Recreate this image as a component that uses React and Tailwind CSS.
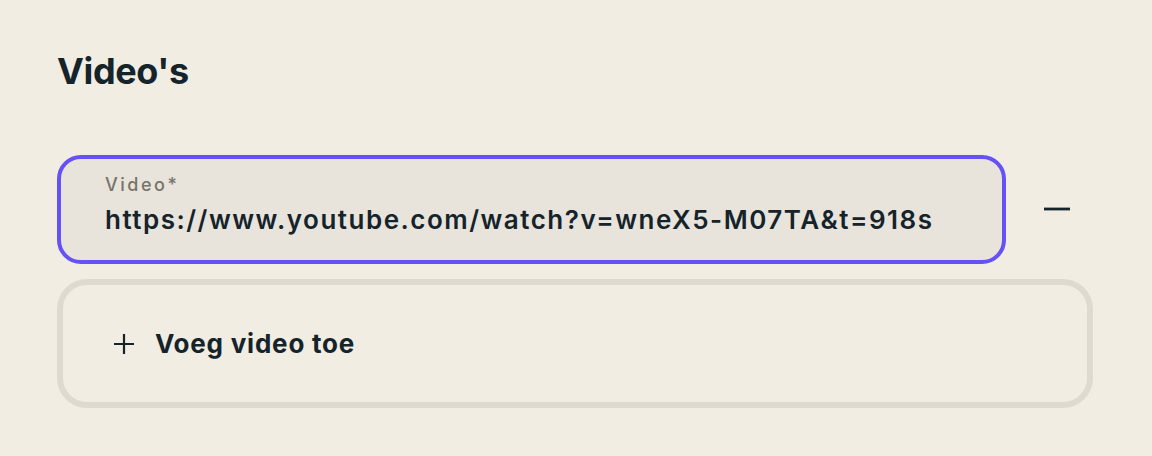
import React from 'react';

function Minus() {
    return (
        <svg width="26" height="26" viewBox="0 0 26 26" fill="none">
            <path d="M0 13h26" stroke="#15232b" strokeWidth="2.8" />
        </svg>
    );
}

function Plus() {
    return (
        <svg width="22" height="22" viewBox="0 0 22 22" fill="none">
            <path d="M11 1v20M1 11h20" stroke="#15232b" strokeWidth="2.2" />
        </svg>
    );
}

export default function App() {
    return (
        <div className="min-h-screen bg-[#f2ede3] pl-[57px] pr-[59px] pt-[50px] text-[#15232b] font-['Inter',sans-serif]">
            <h2 className="text-[36px] font-bold leading-[42px] tracking-[-0.01em]">Video's</h2>

            <div className="mt-[63px] flex items-center">
                {/* Input */}
                <div className="flex-1 h-[109px] rounded-[24px] border-4 border-[#6651f6] bg-[#e8e4db] pl-[44px] pt-[15px]">
                    <div className="text-[18px] font-medium leading-[22px] tracking-[0.14em] text-[#77736b]">Video*</div>
                    <div className="mt-[7px] text-[26px] font-semibold leading-[34px] tracking-[1.5px]">
                        https://www.youtube.com/watch?v=wneX5-M07TA&t=918s
                    </div>
                </div>
                <button className="w-[87px] pl-[14px] mb-[2px] flex items-center justify-center">
                    <Minus />
                </button>
            </div>

            {/* Add video */}
            <button className="mt-[15px] w-full h-[129px] rounded-[30px] border-[6px] border-[#dfdad0] flex items-center gap-[20px] pl-[50px]">
                <Plus />
                <span className="text-[26px] font-bold tracking-[0.03em]">Voeg video toe</span>
            </button>
        </div>
    );
}
